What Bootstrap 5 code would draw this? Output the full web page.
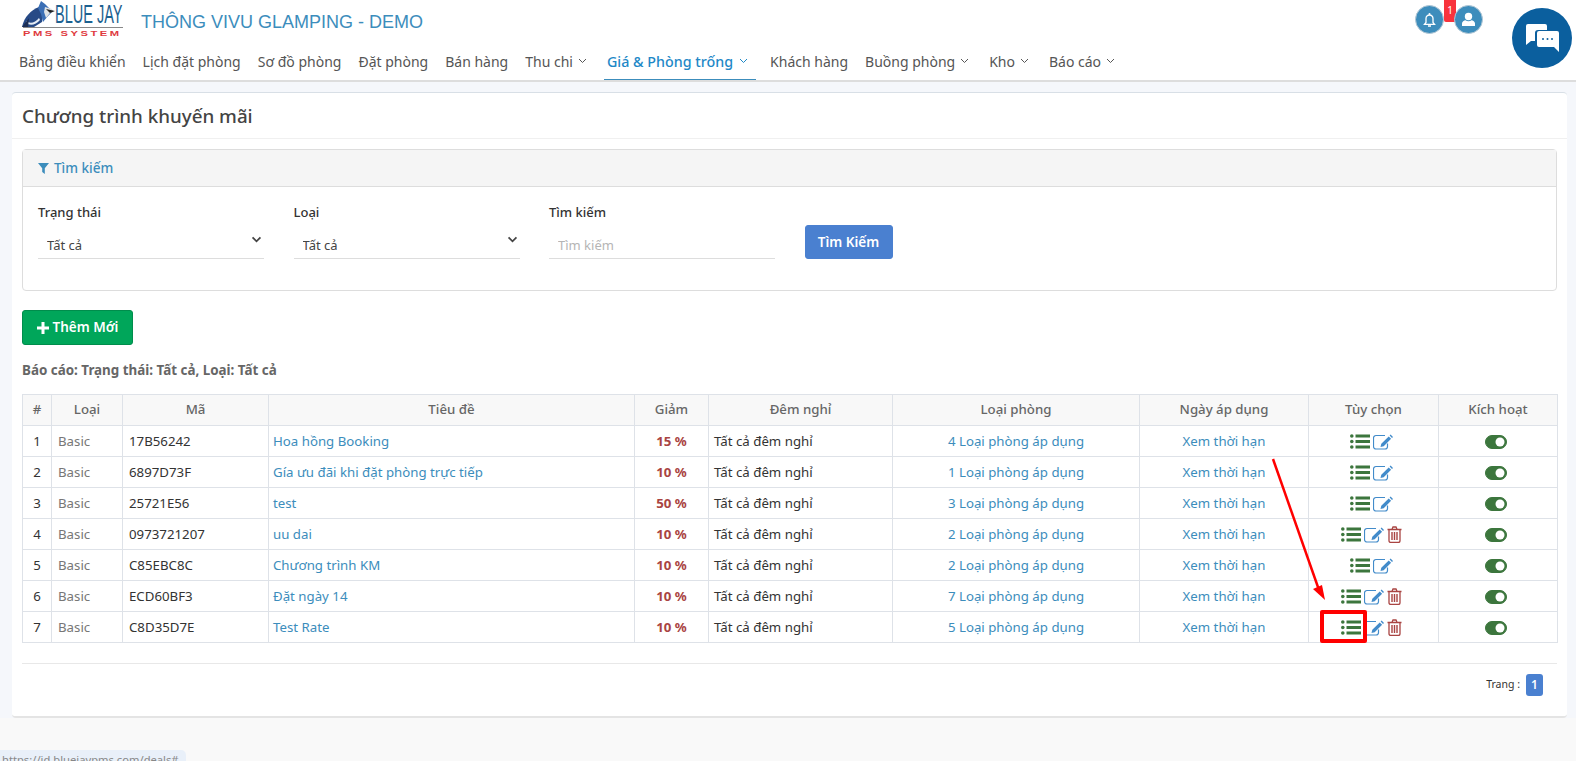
<!DOCTYPE html>
<html lang="vi">
<head>
  <meta charset="UTF-8" />
  <title>Chương trình khuyến mãi</title>
  <link href="https://cdn.jsdelivr.net/npm/bootstrap@5.3.0/dist/css/bootstrap.min.css" rel="stylesheet" />
  <style>
    body {
      font-family: "Noto Sans", "Open Sans", sans-serif;
      font-size: 13.5px;
      color: #333;
      background: #f9f9f9;
      height: 761px;
      overflow: hidden;
      position: relative;
    }
    svg { display: block; }

    /* header */
    .top-head { height: 82px; background: #fff; border-bottom: 2px solid #ddd; }
    .brand-row { height: 42px; padding-left: 22px; }
    .logo-box { width: 101px; height: 38px; }
    .logo-bird { left: 0; top: 0; }
    .logo-name {
      font-family: "Liberation Sans", sans-serif;
      color: #1c6190;
      font-size: 25px;
      line-height: 24px;
      transform: scaleX(.58);
      transform-origin: left top;
      white-space: nowrap;
      left: 33px;
      top: 2px;
    }
    .logo-rule { left: 1px; top: 27px; width: 100px; height: 1px; background: #888; }
    .logo-sub {
      font-family: "Liberation Sans", sans-serif;
      color: #e03b3f;
      font-size: 8px;
      font-weight: 700;
      letter-spacing: 1.8px;
      line-height: 9px;
      transform: scaleX(1.4);
      transform-origin: left top;
      left: 1px;
      top: 29px;
      white-space: nowrap;
    }
    .hotel-name {
      font-family: "Liberation Sans", sans-serif;
      color: #3c8dbc;
      font-size: 18px;
      margin: 0 0 0 18px;
      line-height: 24px;
      position: relative;
      top: 10px;
    }
    .main-menu { padding-left: 16px; height: 38px; gap: 11px; }
    .main-menu .nav-link {
      color: #555;
      font-size: 14px;
      padding: 9px 3px 0;
      height: 38px;
      display: flex;
      gap: 5px;
      white-space: nowrap;
    }
    .main-menu .nav-link svg { margin: 7px 3px 0 0; }
    .main-menu .nav-link.is-on {
      color: #1e88c7;
      font-size: 14.3px;
      font-weight: 500;
      gap: 6px;
      border-bottom: 1px solid #3c8dbc;
    }
    .main-menu .nav-link.is-on svg { margin-right: 5px; }
    .round-btn {
      width: 29px;
      height: 29px;
      top: 5px;
      border-radius: 50%;
      background: #3d8dbc;
      border: 1px solid #b5c9d6;
      display: flex;
      align-items: center;
      justify-content: center;
    }
    .round-bell { left: 1415px; }
    .round-user { left: 1454px; }
    .bell-count {
      left: 1444px;
      top: 0;
      width: 12px;
      height: 22px;
      background: #f8333c;
      color: #fff;
      font-size: 10px;
      line-height: 20px;
      text-align: center;
      border-radius: 0 0 2px 2px;
    }
    .chat-btn {
      left: 1512px;
      top: 8px;
      width: 60px;
      height: 60px;
      border-radius: 50%;
      background: #0b5f9e;
      display: flex;
      align-items: center;
      justify-content: center;
    }

    /* content */
    .page-wrap { background: #f5f7fb; padding: 10px 9px 0 12px; }
    .page-box {
      background: #fff;
      height: 626px;
      border: 0;
      border-top: 1px solid #d8dfe6;
      border-bottom: 2px solid #e4e4e4;
      border-radius: 4px;
    }
    .page-title {
      height: 46px;
      border-bottom: 1px solid #f0f0f0;
      padding: 0 10px;
      font-size: 18.8px;
      font-weight: 500;
      line-height: 46px;
      color: #444;
      margin: 0;
    }
    .page-body { padding: 10px 10px 0; }
    .filter-panel { height: 142px; border-color: #ddd; border-radius: 4px; }
    .filter-head {
      height: 37px;
      padding: 0 15px;
      background: #f5f5f5;
      border-bottom: 1px solid #ddd;
      color: #3c8dbc;
      font-weight: 500;
      font-size: 13.5px;
      gap: 5px;
    }
    .filter-row { padding: 15px 15px 0; gap: 29.5px; }
    .filter-col { width: 226px; }
    .filter-col label { font-weight: 500; font-size: 13px; color: #333; margin: 0 0 7px; line-height: 20px; display: block; }
    .line-input.form-control, .line-input.form-select {
      border: 0;
      border-bottom: 1px solid #ddd;
      border-radius: 0;
      height: 30px;
      padding: 5px 9px 1px;
      font-size: 13px;
      color: #444;
      box-shadow: none;
    }
    .line-input.form-control { padding: 4px 9px 2px; }
    .line-input.form-select {
      background-image: url("data:image/svg+xml,%3csvg xmlns='http://www.w3.org/2000/svg' viewBox='0 0 12 8'%3e%3cpath d='M1.500 1.500 6 6l4.500-4.500' fill='none' stroke='%23444' stroke-width='2'/%3e%3c/svg%3e");
      background-position: right 2px top 7px;
      background-size: 11px 7px;
    }
    .line-input.form-control::placeholder { color: #b5b5b5; }
    .btn-find {
      background: #4a80d0;
      border: 1px solid #4a80d0;
      color: #fff;
      height: 34px;
      width: 88px;
      padding: 0;
      font-size: 13.5px;
      font-weight: 600;
      margin: 23px 0 0 0;
      border-radius: 3px;
    }
    .btn-new {
      background: #00a65a;
      border: 1px solid #008d4c;
      color: #fff;
      width: 111px;
      height: 35px;
      padding: 0;
      margin-top: 19px;
      font-size: 13.5px;
      font-weight: 600;
      border-radius: 3px;
      gap: 4px;
    }
    .report-line { font-size: 13.4px; font-weight: 700; color: #666; margin: 16px 0 15px; line-height: 18px; }
    .deal-table { table-layout: fixed; width: 1535px; margin: 0; border-color: #dee2e8; font-size: 13.25px; }
    .deal-table th {
      background: #f8f8f8;
      color: #666;
      font-weight: 500;
      text-align: center;
      height: 31px;
      padding: 0;
      vertical-align: middle;
    }
    .deal-table td { height: 31px; padding: 1px 5px 0; vertical-align: middle; color: #333; white-space: nowrap; }
    .deal-table a { color: #3c8dbc; text-decoration: none; }
    .deal-table .type-cell, .deal-table .code-cell { padding-left: 6px; }
    .deal-table .type-cell { color: #777; }
    .deal-table .title-cell { padding-left: 4px; }
    .deal-table .off-cell { color: #a94442; font-weight: 700; text-align: center; }
    .act-row { gap: 3px; height: 18px; padding-right: 4px; }
    .deal-table .form-switch { padding: 0 4px 0 0; margin: 0; min-height: 0; height: 14px; display: flex; justify-content: center; }
    .deal-table .form-switch .form-check-input {
      width: 22px;
      height: 14px;
      margin: 0;
      float: none;
      background-color: #3c763d;
      border-color: #3c763d;
    }
    .sep-line { margin: 20px 0 0; border-color: #e8e8e8; opacity: 1; }
    .pager-row { margin-top: 10px; padding-right: 14px; gap: 6px; font-size: 10.5px; }
    .page-one {
      background: #4a80d0;
      color: #fff;
      width: 17px;
      height: 22px;
      line-height: 22px;
      text-align: center;
      border-radius: 3px;
      font-weight: 600;
      font-size: 12px;
    }

    /* status link at the bottom of the window */
    .url-hint {
      left: 0;
      top: 750px;
      width: 186px;
      height: 30px;
      background: #e9f0f9;
      color: #888;
      font-size: 11.2px;
      padding: 0 0 0 2px;
      border-radius: 0 5px 0 0;
      line-height: 20px;
    }

    /* red marks drawn over the screenshot */
    .mark-box { left: 1320px; top: 610px; width: 47px; height: 33px; border: 4px solid #f00; border-radius: 2px; }
    .mark-arrow { left: 1260px; top: 450px; }
  </style>
</head>
<body>
  <svg width="0" height="0" class="position-absolute">
    <symbol id="i-list" viewBox="0 0 20 15">
      <circle cx="1.8" cy="2" r="1.8"/><circle cx="1.8" cy="7.5" r="1.8"/><circle cx="1.8" cy="13" r="1.8"/>
      <rect x="5.5" y=".5" width="14.5" height="3"/><rect x="5.5" y="6" width="14.5" height="3"/><rect x="5.5" y="11.5" width="14.5" height="3"/>
    </symbol>
    <symbol id="i-edit" viewBox="0 0 20 16">
      <path d="M14.5 9.5v3a2.500 2.500 0 0 1-2.500 2.500H3a2.500 2.500 0 0 1-2.500-2.500V4A2.500 2.500 0 0 1 3 1.500h9" fill="none" stroke="#428bca" stroke-width="1.200"/>
      <path d="M15.700 2.400l2.400 2.400-7.400 7.400-3.200.8.800-3.200zM16.600 1.500l1-1 2.400 2.400-1 1z" fill="#428bca"/>
    </symbol>
    <symbol id="i-trash" viewBox="0 0 15 17">
      <path d="M.5 3.500h14M5 3.200 6 1h3l1 2.200M2 3.500v11.300A1.700 1.700 0 0 0 3.700 16.500h7.600a1.700 1.700 0 0 0 1.700-1.700V3.500" fill="none" stroke="#a94442" stroke-width="1.300"/>
      <path d="M5 6v8M7.500 6v8M10 6v8" stroke="#a94442" stroke-width="1.400"/>
    </symbol>
    <symbol id="i-down" viewBox="0 0 9 6">
      <path d="M1 1l3.500 3.500L8 1" fill="none" stroke="currentColor" stroke-width="1"/>
    </symbol>
  </svg>

  <header class="top-head">
    <div class="brand-row d-flex align-items-start">
      <div class="logo-box position-relative">
        <svg class="logo-bird position-absolute" width="33" height="27" viewBox="0 0 33 27">
          <path d="M0 27C2 17 9 10 17 7L21 12 20 22 12 27z" fill="#274a86"/>
          <path d="M16 8 19 1 23 4 27 8 31 11 26 16 21 22 19 14z" fill="#3b6fb5"/>
          <path d="M23 7 30 9 31 12 28 13 24 18 22 12z" fill="#dfe3e6"/>
          <path d="M24 9 33 11 28 13z" fill="#222"/>
          <path d="M4 21C8 24 13 23 17 18L18 20C14 25 8 26 4 23z" fill="#e6edf5"/>
          <path d="M0 27 7 18 6 27z" fill="#1d2f55"/>
        </svg>
        <span class="logo-name position-absolute">BLUE JAY</span>
        <span class="logo-rule position-absolute"></span>
        <span class="logo-sub position-absolute">PMS SYSTEM</span>
      </div>
      <h1 class="hotel-name fw-normal">THÔNG VIVU GLAMPING - DEMO</h1>
    </div>
    <nav class="nav main-menu">
      <a class="nav-link" href="#">Bảng điều khiển</a>
      <a class="nav-link" href="#">Lịch đặt phòng</a>
      <a class="nav-link" href="#">Sơ đồ phòng</a>
      <a class="nav-link" href="#">Đặt phòng</a>
      <a class="nav-link" href="#">Bán hàng</a>
      <a class="nav-link" href="#">Thu chi <svg width="9" height="6"><use href="#i-down"/></svg></a>
      <a class="nav-link is-on" href="#">Giá &amp; Phòng trống <svg width="9" height="6"><use href="#i-down"/></svg></a>
      <a class="nav-link" href="#">Khách hàng</a>
      <a class="nav-link" href="#">Buồng phòng <svg width="9" height="6"><use href="#i-down"/></svg></a>
      <a class="nav-link" href="#">Kho <svg width="9" height="6"><use href="#i-down"/></svg></a>
      <a class="nav-link" href="#">Báo cáo <svg width="9" height="6"><use href="#i-down"/></svg></a>
    </nav>
  </header>

  <span class="round-btn round-bell position-absolute">
    <svg width="15" height="16" viewBox="0 0 15 16"><path d="M4 10.500V6.500a3.500 3.500 0 0 1 7 0v4l1.500 1.800h-10zM6 14h3" fill="none" stroke="#fff" stroke-width="1.300"/><circle cx="7.500" cy="2" r="1" fill="#fff"/></svg>
  </span>
  <span class="bell-count position-absolute">1</span>
  <span class="round-btn round-user position-absolute">
    <svg width="15" height="15" viewBox="0 0 15 15"><circle cx="7.500" cy="4.500" r="3.700" fill="#fff"/><path d="M1 14v-2.500C1 9.500 3 8.500 4.500 8.300c1.700 1.200 4.300 1.200 6 0C12 8.500 14 9.500 14 11.500V14z" fill="#fff"/></svg>
  </span>
  <span class="chat-btn position-absolute">
    <svg width="33" height="29" viewBox="0 0 33 29">
      <path d="M2 0h17a2 2 0 0 1 2 2v4H12a3 3 0 0 0-3 3v8H5l-5 4V2a2 2 0 0 1 2-2z" fill="#fff"/>
      <path d="M13 7h18a2 2 0 0 1 2 2v19l-5-5H13a2 2 0 0 1-2-2V9a2 2 0 0 1 2-2z" fill="#fff"/>
      <circle cx="17" cy="15" r="1" fill="#0b5f9e"/><circle cx="21.500" cy="15" r="1" fill="#0b5f9e"/><circle cx="26" cy="15" r="1" fill="#0b5f9e"/>
    </svg>
  </span>

  <div class="page-wrap">
    <main class="page-box">
      <h2 class="page-title">Chương trình khuyến mãi</h2>
      <div class="page-body">
        <section class="card filter-panel">
          <div class="filter-head d-flex align-items-center">
            <svg width="11" height="11" viewBox="0 0 11 11"><path d="M0 0h11L6.800 5.200V11L4.200 9V5.200z" fill="#3c8dbc"/></svg>
            Tìm kiếm
          </div>
          <div class="filter-row d-flex">
            <div class="filter-col">
              <label>Trạng thái</label>
              <select class="form-select line-input"><option>Tất cả</option></select>
            </div>
            <div class="filter-col">
              <label>Loại</label>
              <select class="form-select line-input"><option>Tất cả</option></select>
            </div>
            <div class="filter-col">
              <label>Tìm kiếm</label>
              <input class="form-control line-input" placeholder="Tìm kiếm" />
            </div>
            <button class="btn btn-find" type="button">Tìm Kiếm</button>
          </div>
        </section>

        <button class="btn btn-new d-flex align-items-center justify-content-center" type="button">
          <svg width="12" height="12" viewBox="0 0 12 12"><path d="M4.500 0h3v4.500H12v3H7.500V12h-3V7.500H0v-3h4.500z" fill="#fff"/></svg>
          Thêm Mới
        </button>

        <p class="report-line">Báo cáo: Trạng thái: Tất cả, Loại: Tất cả</p>

        <table class="table table-bordered deal-table">
          <colgroup>
            <col style="width:29px"><col style="width:71px"><col style="width:146px"><col style="width:366px"><col style="width:74px"><col style="width:184px"><col style="width:247px"><col style="width:169px"><col style="width:130px"><col style="width:119px">
          </colgroup>
          <thead>
            <tr><th>#</th><th>Loại</th><th>Mã</th><th>Tiêu đề</th><th>Giảm</th><th>Đêm nghỉ</th><th>Loại phòng</th><th>Ngày áp dụng</th><th>Tùy chọn</th><th>Kích hoạt</th></tr>
          </thead>
          <tbody id="dealRows"></tbody>
        </table>

        <hr class="sep-line" />
        <div class="pager-row d-flex justify-content-end align-items-center">
          <span>Trang :</span><span class="page-one">1</span>
        </div>
      </div>
    </main>
  </div>

  <div class="url-hint position-absolute">https://id.bluejaypms.com/deals#</div>

  <span class="mark-box position-absolute"></span>
  <svg class="mark-arrow position-absolute" width="70" height="155" viewBox="0 0 70 155">
    <path d="M13 9 59 140" stroke="#f00" stroke-width="2.500" fill="none"/>
    <path d="M65 150 53 139 62 135z" fill="#f00"/>
  </svg>

  <script src="https://cdn.jsdelivr.net/npm/bootstrap@5.3.0/dist/js/bootstrap.bundle.min.js"></script>
  <script>
    // table rows of the deals list
    const deals = [
      ["17B56242", "Hoa hồng Booking", "15 %", 4, false],
      ["6897D73F", "Gía ưu đãi khi đặt phòng trực tiếp", "10 %", 1, false],
      ["25721E56", "test", "50 %", 3, false],
      ["0973721207", "uu dai", "10 %", 2, true],
      ["C85EBC8C", "Chương trình KM", "10 %", 2, false],
      ["ECD60BF3", "Đặt ngày 14", "10 %", 7, true],
      ["C8D35D7E", "Test Rate", "10 %", 5, true]
    ];
    const icon = (id, w, h, color) =>
      `<svg width="${w}" height="${h}" fill="${color}"><use href="#${id}"/></svg>`;

    document.getElementById("dealRows").innerHTML = deals.map((d, i) => `
      <tr>
        <td class="text-center">${i + 1}</td>
        <td class="type-cell">Basic</td>
        <td class="code-cell">${d[0]}</td>
        <td class="title-cell"><a href="#">${d[1]}</a></td>
        <td class="off-cell">${d[2]}</td>
        <td>Tất cả đêm nghỉ</td>
        <td class="text-center"><a href="#">${d[3]} Loại phòng áp dụng</a></td>
        <td class="text-center"><a href="#">Xem thời hạn</a></td>
        <td>
          <div class="act-row d-flex justify-content-center align-items-center">
            ${icon("i-list", 20, 15, "#3c763d")}
            ${icon("i-edit", 20, 16, "#428bca")}
            ${d[4] ? icon("i-trash", 15, 17, "#a94442") : ""}
          </div>
        </td>
        <td><div class="form-check form-switch"><input class="form-check-input" type="checkbox" checked></div></td>
      </tr>`).join("");
  </script>
</body>
</html>
